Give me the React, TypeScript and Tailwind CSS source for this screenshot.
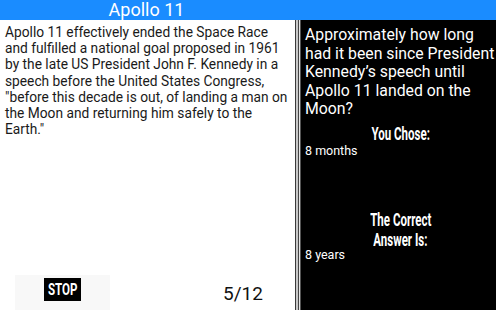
const lines = [
  "Apollo 11 effectively ended the Space Race",
  "and fulfilled a national goal proposed in 1961",
  "by the late US President John F. Kennedy in a",
  "speech before the United States Congress,",
  "\"before this decade is out, of landing a man on",
  "the Moon and returning him safely to the",
  "Earth.\"",
];

function Label({ children }: { children: React.ReactNode }) {
  return (
    <div className="flex justify-center">
      <span className="inline-block font-bold text-[18px] leading-[20px] text-white scale-x-[0.64] whitespace-nowrap">
        {children}
      </span>
    </div>
  );
}

export default function App() {
  return (
    <div className="w-[496px] h-[310px] flex flex-col overflow-hidden font-['Roboto',sans-serif] bg-white">
      {/* header */}
      <div className="h-[20px] bg-[#1a8cff] flex">
        <div className="w-[293px] text-center text-white text-[18px] leading-[20px]">Apollo 11</div>
      </div>

      <div className="flex-1 flex">
        {/* left column */}
        <div className="w-[295px] flex flex-col justify-between">
          <div className="pl-[5px] pt-[4px] text-[13.75px] leading-[16.2px] text-[#1a1a1a]">
            {lines.map((l, i) => (
              <div key={i} className="whitespace-nowrap">{l}</div>
            ))}
          </div>
          <div className="flex items-end h-[35px]">
            <div className="ml-[15px] w-[95px] h-[35px] bg-[#f8f8f8] flex items-start justify-center pt-[3px]">
              <span className="bg-black text-white font-bold text-[17px] leading-[23px] w-[37px] flex justify-center">
                <span className="inline-block scale-x-[0.68]">STOP</span>
              </span>
            </div>
            <div className="ml-[113px] mb-[5px] text-[19px] leading-[22px] text-[#111]">5/12</div>
          </div>
        </div>

        {/* divider */}
        <div className="flex">
          <div className="w-px bg-[#3a3a3a]" />
          <div className="w-[2px] bg-[#c8c8c8]" />
          <div className="w-px bg-[#444]" />
          <div className="w-px bg-[#e6e6e6]" />
          <div className="w-px bg-[#555]" />
        </div>

        {/* right column */}
        <div className="flex-1 bg-black text-white pl-[4px] pt-[6px]">
          <p className="text-[15.8px] leading-[18.5px]">
            Approximately how long had it been since President Kennedy’s speech until Apollo 11 landed on the Moon?
          </p>
          <div className="mt-[5px]">
            <Label>You Chose:</Label>
          </div>
          <div className="text-[12.5px] leading-[15px] -mt-[1px]">8 months</div>
          <div className="mt-[52px]">
            <Label>The Correct</Label>
            <Label>Answer Is:</Label>
          </div>
          <div className="text-[12.5px] leading-[15px] -mt-[3px]">8 years</div>
        </div>
      </div>
    </div>
  );
}
